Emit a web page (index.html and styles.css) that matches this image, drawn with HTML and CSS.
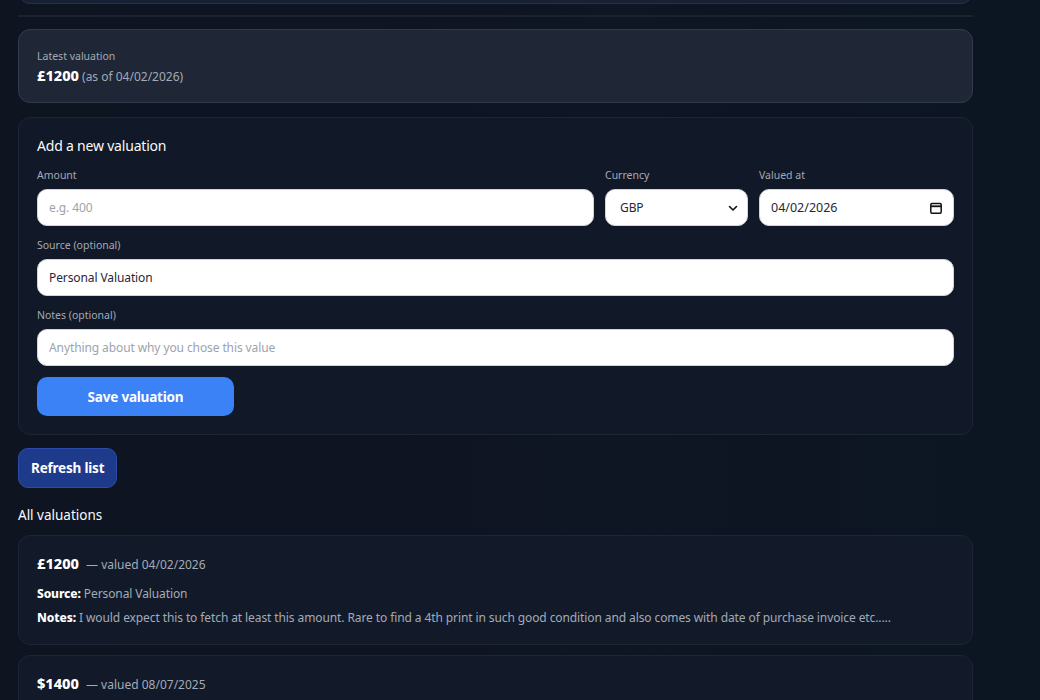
FILE: index.html
```html
<!DOCTYPE html>
<html lang="en">
<head>
    <meta charset="UTF-8">
    <meta name="viewport" content="width=device-width, initial-scale=1.0">
    <title>Valuations</title>
    <link rel="stylesheet" href="styles.css">
</head>
<body>
<div class="page">
    <div class="prev-card"></div>
    <hr class="divider">

    <div class="latest">
        <div class="muted-label">Latest valuation</div>
        <div class="latest-value"><span class="amount">£1200</span> <span class="as-of">(as of 04/02/2026)</span></div>
    </div>

    <form class="panel" onsubmit="return false">
        <h3 class="panel-title">Add a new valuation</h3>
        <div class="row-three">
            <div class="field">
                <label class="muted-label">Amount</label>
                <input class="text-input" type="text" placeholder="e.g. 400">
            </div>
            <div class="field">
                <label class="muted-label">Currency</label>
                <div class="box-input">
                    <span>GBP</span>
                    <svg width="12" height="12" viewBox="0 0 12 12"><path d="M2.5 4.5 L6 8 L9.5 4.5" fill="none" stroke="#111" stroke-width="1.6" stroke-linecap="round" stroke-linejoin="round"/></svg>
                </div>
            </div>
            <div class="field">
                <label class="muted-label">Valued at</label>
                <div class="box-input date-box">
                    <span>04/02/2026</span>
                    <svg width="14" height="14" viewBox="0 0 14 14"><rect x="1.8" y="2.5" width="10.4" height="9.7" rx="1.2" fill="none" stroke="#111" stroke-width="1.5"/><path d="M1.8 5.3 H12.2" stroke="#111" stroke-width="1.8"/></svg>
                </div>
            </div>
        </div>
        <div class="field">
            <label class="muted-label">Source (optional)</label>
            <input class="text-input" type="text" value="Personal Valuation">
        </div>
        <div class="field">
            <label class="muted-label">Notes (optional)</label>
            <input class="text-input" type="text" placeholder="Anything about why you chose this value">
        </div>
        <button class="btn-save" type="button">Save valuation</button>
    </form>

    <button class="btn-refresh" type="button">Refresh list</button>

    <h3 class="list-title">All valuations</h3>

    <div class="val-card">
        <div class="val-head"><span class="amount">£1200</span> <span class="val-date">— valued 04/02/2026</span></div>
        <div class="val-line"><b>Source:</b> Personal Valuation</div>
        <div class="val-line"><b>Notes:</b> I would expect this to fetch at least this amount. Rare to find a 4th print in such good condition and also comes with date of purchase invoice etc.....</div>
    </div>

    <div class="val-card">
        <div class="val-head"><span class="amount">$1400</span> <span class="val-date">— valued 08/07/2025</span></div>
    </div>
</div>
</body>
</html>
```

FILE: styles.css
```css
html, body {margin: 0; padding: 0; height: 100%; overflow: hidden;}

body {background: linear-gradient(90deg, #0f1421 0%, #0e1523 60%, #0c1622 100%); color: #f3f4f6; font-family: "Noto Sans", "Open Sans", sans-serif;}

.page {width: 955px; margin-left: 18px;}

.prev-card {height: 40px; margin-top: -38px; background: #182033; border: 1px solid #283247; border-radius: 12px;}

.divider {border: 0; border-top: 2px solid #1b2333; margin: 11px 0 12px 0;}

.latest {box-sizing: border-box; height: 74px; background: #1f2737; border: 1px solid #313b4c; border-radius: 12px; padding: 19px 18px 0 18px;}

.muted-label {display: block; font-size: 10.5px; line-height: 15px; color: #a3aab6; margin-bottom: 6px;}

.latest .muted-label {margin-bottom: 1px;}

.latest-value {font-size: 12px; line-height: 20px; color: #a3aab6;}

.amount {font-size: 14.5px; font-weight: 800; color: #ffffff;}

.panel {margin-top: 14px; background: #111827; border: 1px solid #1d2535; border-radius: 12px; padding: 18px 18px 18px 18px;}

.panel-title {margin: 0 0 12px 0; font-size: 14px; line-height: 20px; letter-spacing: -0.2px; font-weight: 400; color: #f9fafb;}

.row-three {display: grid; grid-template-columns: 557px 143px 1fr; gap: 11px;}

.field {margin-bottom: 12px;}

.text-input, .box-input {box-sizing: border-box; width: 100%; height: 37px; border: 1px solid #d1d5db; border-radius: 10px; background: #ffffff; padding: 0 11px; font-family: inherit; font-size: 12px; letter-spacing: -0.1px; color: #1f2937; outline: none;}

.text-input::placeholder {color: #9ca3af;}

.box-input {display: flex; align-items: center; justify-content: space-between; padding: 0 8px 0 14px;}

.date-box {padding: 0 10px 0 11px; font-size: 12.5px; letter-spacing: 0;}

.btn-save {width: 197px; height: 39px; border: 0; border-radius: 10px; background: #3b82f6; color: #fff; font-family: inherit; font-size: 13.5px; letter-spacing: -0.2px; font-weight: 700; margin-top: -1px;}

.btn-refresh {margin-top: 13px; height: 40px; padding: 0 12px; border: 1px solid #2d4ba8; border-radius: 10px; background: #1e3a8a; color: #fff; font-family: inherit; font-size: 13.5px; letter-spacing: -0.2px; font-weight: 700;}

.list-title {margin: 17px 0 10px 0; font-size: 13.5px; line-height: 20px; font-weight: 400; color: #f9fafb;}

.val-card {box-sizing: border-box; background: #121a29; border: 1px solid #1d2535; border-radius: 12px; padding: 17px 18px 14px 18px; margin-bottom: 10px;}

.val-head {font-size: 12px; line-height: 20px; color: #a3aab6; margin-bottom: 7px;}

.val-date {margin-left: 4px;}

.val-line {font-size: 12px; letter-spacing: -0.1px; color: #a3aab6; line-height: 24px;}

.val-line b {color: #ffffff; font-weight: 800;}
```
